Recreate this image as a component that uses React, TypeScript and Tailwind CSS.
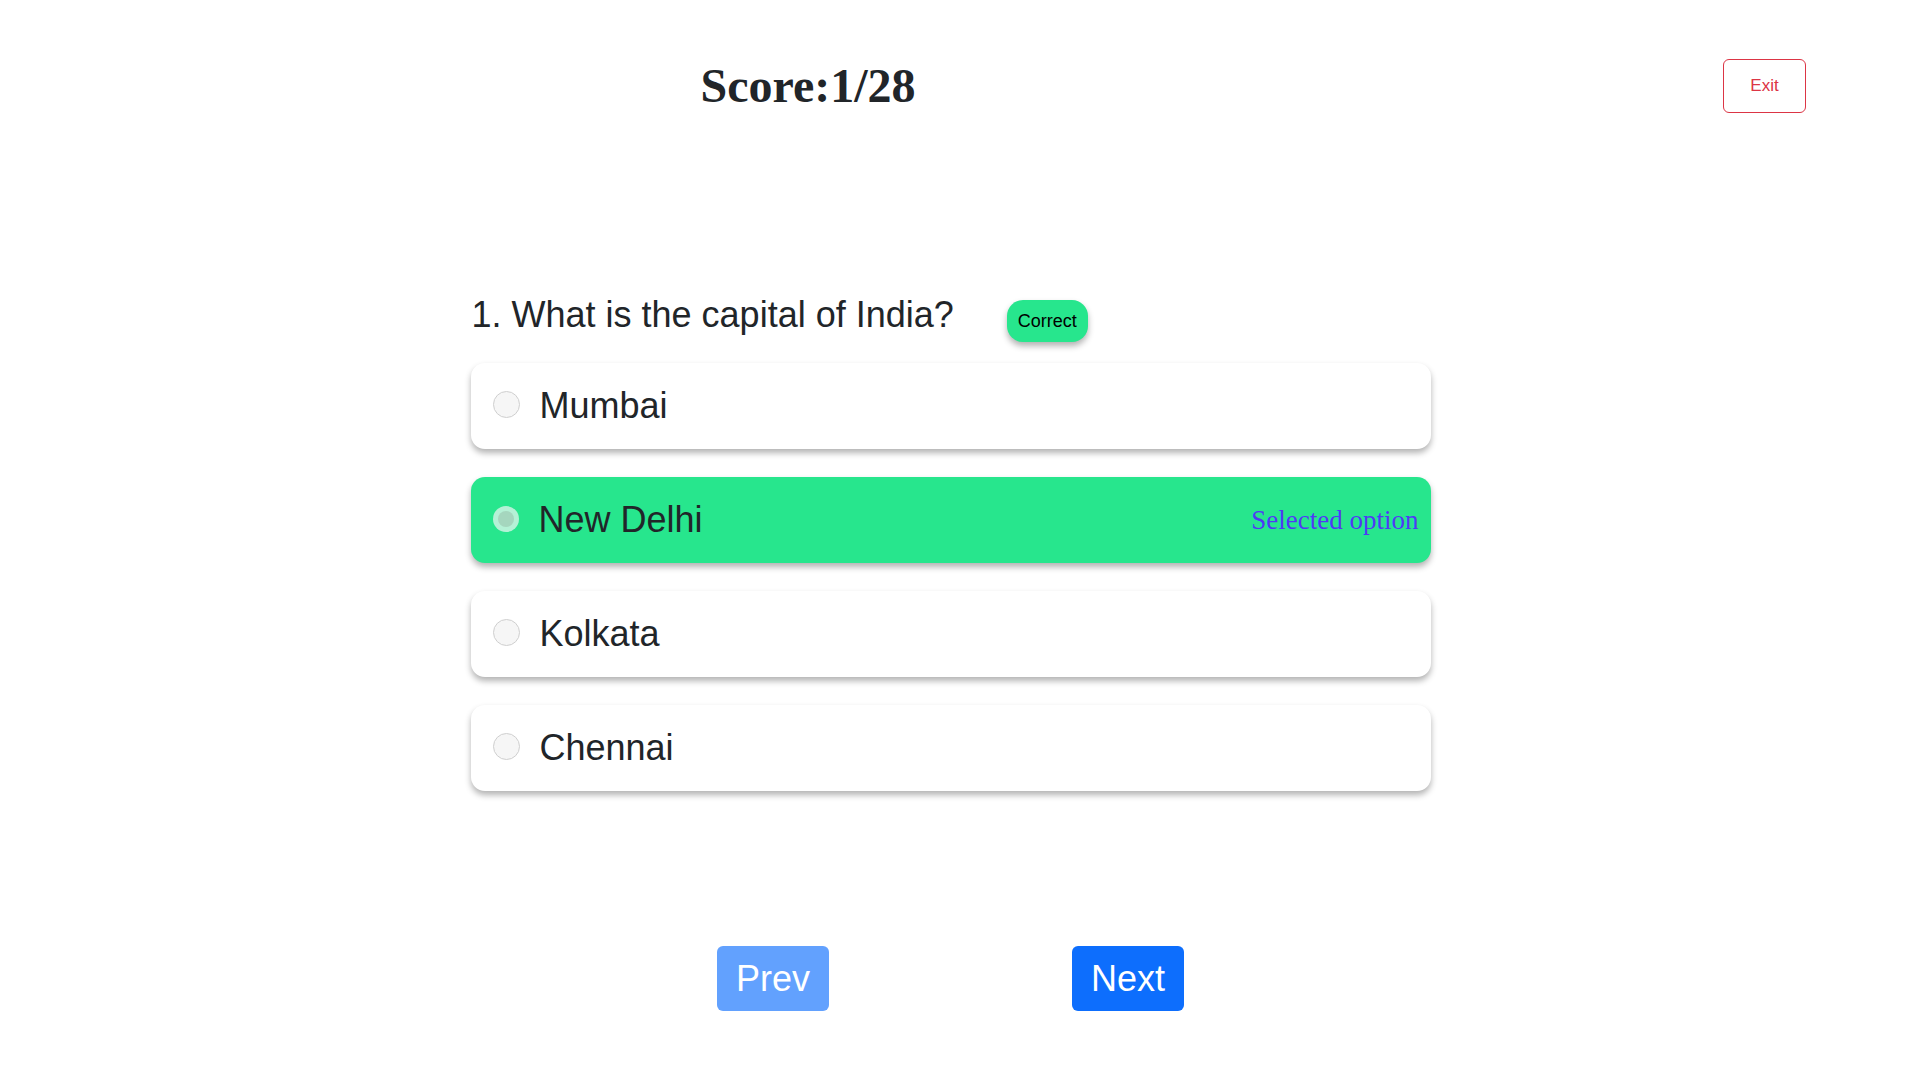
import React from "react";

const options = ["Mumbai", "New Delhi", "Kolkata", "Chennai"];
const selected = 1;

const Radio = ({ checked }: { checked: boolean }) =>
  checked ? (
    <span className="flex items-center justify-center w-[26px] h-[26px] -mt-[3px] rounded-full bg-[#b5f1d6] shrink-0">
      <span className="w-[16px] h-[16px] rounded-full bg-[#a5d6be]"></span>
    </span>
  ) : (
    <span className="w-[27px] h-[27px] -mt-[3px] rounded-full border border-[#cfcfcf] bg-[#f6f6f6] shrink-0"></span>
  );

const App = () => {
  return (
    <div className="bg-white min-h-[1204px] pb-[193px] pr-[19px] font-['Liberation_Sans',Arial,sans-serif] text-[#212529]">
      <div className="flex items-center pt-[59px] h-[113px]">
        <div className="w-[1616px] text-center">
          <h1 className="font-['Liberation_Serif','Times_New_Roman',serif] font-bold text-[48px] leading-none">
            Score:1/28
          </h1>
        </div>
        <button className="ml-[107px] w-[83px] h-[54px] border border-[#dc3545] rounded-[6px] text-[#dc3545] text-[17px]">
          Exit
        </button>
      </div>

      <div className="w-[960px] mx-auto">
        <div className="flex items-baseline h-[40px] mt-[182px]">
          <h2 className="text-[36px] leading-[40px] pl-[1px]">1. What is the capital of India?</h2>
          <span className="ml-[53px] h-[42px] px-[11px] py-[11px] text-[18px] leading-[20px] text-black bg-[#27e68d] rounded-[16px] shadow-[0_4px_6px_rgba(0,0,0,0.3)]">
            Correct
          </span>
        </div>

        <div className="flex flex-col gap-[28px] mt-[28px]">
          {options.map((opt, i) => (
            <div
              key={opt}
              className={
                i === selected
                  ? "flex items-center h-[86px] pl-[22px] pr-[12px] gap-[20px] rounded-[14px] bg-[#27e68d] shadow-[0_4px_6px_rgba(0,0,0,0.3)]"
                  : "flex items-center h-[86px] pl-[22px] pr-[12px] gap-[20px] rounded-[14px] bg-white shadow-[0_4px_6px_rgba(0,0,0,0.3)]"
              }
            >
              <Radio checked={i === selected} />
              <span className="text-[36px] leading-[40px]">{opt}</span>
              {i === selected && (
                <span className="ml-auto font-['Liberation_Serif','Times_New_Roman',serif] text-[27px] text-indigo-600">
                  Selected option
                </span>
              )}
            </div>
          ))}
        </div>

        <div className="flex justify-center gap-[243px] mt-[155px]">
          <button className="w-[112px] h-[65px] rounded-[6px] bg-[#62a1fe] text-white text-[36px]">
            Prev
          </button>
          <button className="w-[112px] h-[65px] rounded-[6px] bg-[#0d6efd] text-white text-[36px]">
            Next
          </button>
        </div>
      </div>
    </div>
  );
};

export default App;
